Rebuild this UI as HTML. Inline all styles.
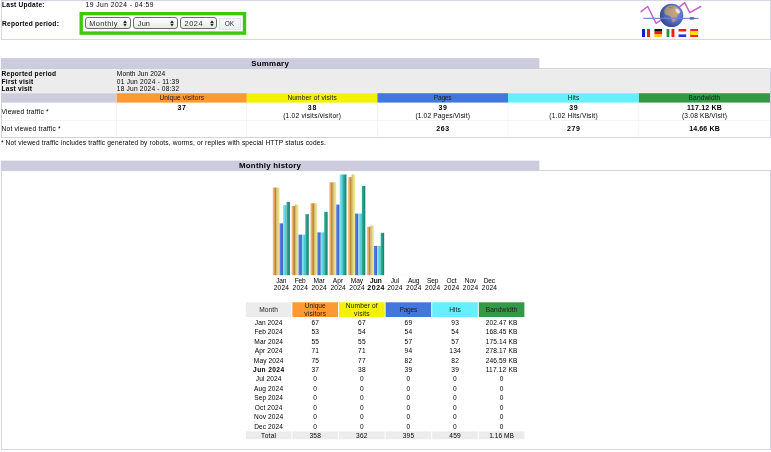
<!DOCTYPE html>
<html><head><meta charset="utf-8"><title>Statistics</title>
<style>
html,body{margin:0;padding:0;background:#fff;}
body{width:771px;height:452px;overflow:hidden;position:relative;font-family:"Liberation Sans",sans-serif;color:#000;}
.r{position:absolute;display:block;}
.t{position:absolute;display:block;white-space:pre;line-height:12px;font-family:"Liberation Sans",sans-serif;}
#w{position:absolute;left:0;top:0;width:771px;height:452px;will-change:transform;}
</style></head><body><div id="w">
<div class="r" style="left:0.50px;top:0.00px;width:770.00px;height:39.50px;background:#fff;box-sizing:border-box;border:1px solid #d6d6e6;"></div>
<div class="r" style="left:1.00px;top:68.30px;width:769.50px;height:70.00px;background:#fff;box-sizing:border-box;border:1px solid #d2d2e2;"></div>
<div class="r" style="left:1.00px;top:170.20px;width:769.50px;height:279.60px;background:#fff;box-sizing:border-box;border:1px solid #d2d2e2;"></div>
<svg class="r" style="left:0;top:0" width="771" height="452" viewBox="0 0 771 452"><defs><linearGradient id="g0" x1="0" y1="0" x2="1" y2="0"><stop offset="0%" stop-color="#f4b97a"/><stop offset="40%" stop-color="#eba95f"/><stop offset="72%" stop-color="#ba863c"/><stop offset="100%" stop-color="#a97a32"/></linearGradient><linearGradient id="g1" x1="0" y1="0" x2="1" y2="0"><stop offset="0%" stop-color="#c6b05a"/><stop offset="45%" stop-color="#e4d684"/><stop offset="100%" stop-color="#f1e9a4"/></linearGradient><linearGradient id="g2" x1="0" y1="0" x2="1" y2="0"><stop offset="0%" stop-color="#5a86e4"/><stop offset="50%" stop-color="#4674d8"/><stop offset="100%" stop-color="#3a5fc0"/></linearGradient><linearGradient id="g3" x1="0" y1="0" x2="1" y2="0"><stop offset="0%" stop-color="#8ae8f2"/><stop offset="50%" stop-color="#62d8e8"/><stop offset="100%" stop-color="#40b8cc"/></linearGradient><linearGradient id="g4" x1="0" y1="0" x2="1" y2="0"><stop offset="0%" stop-color="#38b09c"/><stop offset="50%" stop-color="#249a84"/><stop offset="100%" stop-color="#167a68"/></linearGradient></defs>
<rect x="81.2" y="13.7" width="163.3" height="19.4" fill="none" stroke="#3fc80b" stroke-width="3.4"/>
<rect x="0.80" y="58.10" width="538.60" height="11.10" fill="#ccccdd"/>
<rect x="1.50" y="69.20" width="768.50" height="24.00" fill="#ececec"/>
<rect x="1.50" y="93.20" width="115.20" height="9.40" fill="#ccccdd"/>
<rect x="116.70" y="93.20" width="130.10" height="9.40" fill="#ff9933"/>
<rect x="246.80" y="93.20" width="130.60" height="9.40" fill="#f3f300"/>
<rect x="377.40" y="93.20" width="130.60" height="9.40" fill="#4477dd"/>
<rect x="508.00" y="93.20" width="130.90" height="9.40" fill="#66f0ff"/>
<rect x="638.90" y="93.20" width="131.10" height="9.40" fill="#339944"/>
<rect x="116.40" y="102.60" width="0.60" height="34.90" fill="#ebebeb"/>
<rect x="246.50" y="102.60" width="0.60" height="34.90" fill="#ebebeb"/>
<rect x="377.10" y="102.60" width="0.60" height="34.90" fill="#ebebeb"/>
<rect x="507.70" y="102.60" width="0.60" height="34.90" fill="#ebebeb"/>
<rect x="638.60" y="102.60" width="0.60" height="34.90" fill="#ebebeb"/>
<rect x="1.50" y="120.20" width="768.50" height="0.60" fill="#ebebeb"/>
<rect x="0.80" y="160.60" width="538.60" height="10.50" fill="#ccccdd"/>
<rect x="272.80" y="187.58" width="3.42" height="87.62" fill="url(#g0)"/>
<rect x="276.22" y="187.58" width="3.42" height="87.62" fill="url(#g1)"/>
<rect x="279.64" y="223.35" width="3.42" height="51.85" fill="url(#g2)"/>
<rect x="283.06" y="205.31" width="3.42" height="69.89" fill="url(#g3)"/>
<rect x="286.48" y="201.90" width="3.42" height="73.30" fill="url(#g4)"/>
<rect x="291.65" y="205.89" width="3.42" height="69.31" fill="url(#g0)"/>
<rect x="295.07" y="204.58" width="3.42" height="70.62" fill="url(#g1)"/>
<rect x="298.49" y="234.62" width="3.42" height="40.58" fill="url(#g2)"/>
<rect x="301.91" y="234.62" width="3.42" height="40.58" fill="url(#g3)"/>
<rect x="305.33" y="214.22" width="3.42" height="60.98" fill="url(#g4)"/>
<rect x="310.50" y="203.27" width="3.42" height="71.93" fill="url(#g0)"/>
<rect x="313.92" y="203.27" width="3.42" height="71.93" fill="url(#g1)"/>
<rect x="317.34" y="232.36" width="3.42" height="42.84" fill="url(#g2)"/>
<rect x="320.76" y="232.36" width="3.42" height="42.84" fill="url(#g3)"/>
<rect x="324.18" y="211.80" width="3.42" height="63.40" fill="url(#g4)"/>
<rect x="329.35" y="182.35" width="3.42" height="92.85" fill="url(#g0)"/>
<rect x="332.77" y="182.35" width="3.42" height="92.85" fill="url(#g1)"/>
<rect x="336.19" y="204.56" width="3.42" height="70.64" fill="url(#g2)"/>
<rect x="339.61" y="174.50" width="3.42" height="100.70" fill="url(#g3)"/>
<rect x="343.03" y="174.50" width="3.42" height="100.70" fill="url(#g4)"/>
<rect x="348.20" y="177.12" width="3.42" height="98.08" fill="url(#g0)"/>
<rect x="351.62" y="174.50" width="3.42" height="100.70" fill="url(#g1)"/>
<rect x="355.04" y="213.58" width="3.42" height="61.62" fill="url(#g2)"/>
<rect x="358.46" y="213.58" width="3.42" height="61.62" fill="url(#g3)"/>
<rect x="361.88" y="185.93" width="3.42" height="89.27" fill="url(#g4)"/>
<rect x="367.05" y="226.81" width="3.42" height="48.39" fill="url(#g0)"/>
<rect x="370.47" y="225.50" width="3.42" height="49.70" fill="url(#g1)"/>
<rect x="373.89" y="245.89" width="3.42" height="29.31" fill="url(#g2)"/>
<rect x="377.31" y="245.89" width="3.42" height="29.31" fill="url(#g3)"/>
<rect x="380.73" y="232.80" width="3.42" height="42.40" fill="url(#g4)"/>
<rect x="385.90" y="274.70" width="3.42" height="0.50" fill="#f6f6f0"/>
<rect x="389.32" y="274.70" width="3.42" height="0.50" fill="#f6f6f0"/>
<rect x="392.74" y="274.70" width="3.42" height="0.50" fill="#f6f6f0"/>
<rect x="396.16" y="274.70" width="3.42" height="0.50" fill="#f6f6f0"/>
<rect x="399.58" y="274.70" width="3.42" height="0.50" fill="#f6f6f0"/>
<rect x="404.75" y="274.70" width="3.42" height="0.50" fill="#f6f6f0"/>
<rect x="408.17" y="274.70" width="3.42" height="0.50" fill="#f6f6f0"/>
<rect x="411.59" y="274.70" width="3.42" height="0.50" fill="#f6f6f0"/>
<rect x="415.01" y="274.70" width="3.42" height="0.50" fill="#f6f6f0"/>
<rect x="418.43" y="274.70" width="3.42" height="0.50" fill="#f6f6f0"/>
<rect x="423.60" y="274.70" width="3.42" height="0.50" fill="#f6f6f0"/>
<rect x="427.02" y="274.70" width="3.42" height="0.50" fill="#f6f6f0"/>
<rect x="430.44" y="274.70" width="3.42" height="0.50" fill="#f6f6f0"/>
<rect x="433.86" y="274.70" width="3.42" height="0.50" fill="#f6f6f0"/>
<rect x="437.28" y="274.70" width="3.42" height="0.50" fill="#f6f6f0"/>
<rect x="442.45" y="274.70" width="3.42" height="0.50" fill="#f6f6f0"/>
<rect x="445.87" y="274.70" width="3.42" height="0.50" fill="#f6f6f0"/>
<rect x="449.29" y="274.70" width="3.42" height="0.50" fill="#f6f6f0"/>
<rect x="452.71" y="274.70" width="3.42" height="0.50" fill="#f6f6f0"/>
<rect x="456.13" y="274.70" width="3.42" height="0.50" fill="#f6f6f0"/>
<rect x="461.30" y="274.70" width="3.42" height="0.50" fill="#f6f6f0"/>
<rect x="464.72" y="274.70" width="3.42" height="0.50" fill="#f6f6f0"/>
<rect x="468.14" y="274.70" width="3.42" height="0.50" fill="#f6f6f0"/>
<rect x="471.56" y="274.70" width="3.42" height="0.50" fill="#f6f6f0"/>
<rect x="474.98" y="274.70" width="3.42" height="0.50" fill="#f6f6f0"/>
<rect x="480.15" y="274.70" width="3.42" height="0.50" fill="#f6f6f0"/>
<rect x="483.57" y="274.70" width="3.42" height="0.50" fill="#f6f6f0"/>
<rect x="486.99" y="274.70" width="3.42" height="0.50" fill="#f6f6f0"/>
<rect x="490.41" y="274.70" width="3.42" height="0.50" fill="#f6f6f0"/>
<rect x="493.83" y="274.70" width="3.42" height="0.50" fill="#f6f6f0"/>
<rect x="245.80" y="302.30" width="45.60" height="14.70" fill="#ececec"/>
<rect x="292.40" y="302.30" width="45.60" height="14.70" fill="#ff9933"/>
<rect x="339.00" y="302.30" width="45.60" height="14.70" fill="#f3f300"/>
<rect x="385.60" y="302.30" width="45.60" height="14.70" fill="#4477dd"/>
<rect x="432.20" y="302.30" width="45.60" height="14.70" fill="#66f0ff"/>
<rect x="478.80" y="302.30" width="45.60" height="14.70" fill="#339944"/>
<rect x="245.80" y="431.40" width="45.60" height="7.80" fill="#ececec"/>
<rect x="292.40" y="431.40" width="45.60" height="7.80" fill="#ececec"/>
<rect x="339.00" y="431.40" width="45.60" height="7.80" fill="#ececec"/>
<rect x="385.60" y="431.40" width="45.60" height="7.80" fill="#ececec"/>
<rect x="432.20" y="431.40" width="45.60" height="7.80" fill="#ececec"/>
<rect x="478.80" y="431.40" width="45.60" height="7.80" fill="#ececec"/></svg>
<span class="t" style="left:2.00px;top:-1px;font-size:6.60px;letter-spacing:0.237px;font-weight:bold;">Last Update:</span>
<span class="t" style="left:85.50px;top:-1px;font-size:6.70px;letter-spacing:0.466px;">19 Jun 2024 - 04:59</span>
<span class="t" style="left:2.00px;top:18px;font-size:6.60px;letter-spacing:0.247px;font-weight:bold;">Reported period:</span>
<div class="r" style="left:84.80px;top:17.10px;width:45.80px;height:11.70px;background:linear-gradient(#ffffff,#f6f6f6 45%,#e9e9e9);box-sizing:border-box;border:1px solid #6a6a6a;border-radius:3px;"></div>
<span class="t" style="left:89.30px;top:18px;font-size:7.40px;letter-spacing:0.380px;color:#2a2a2a;">Monthly</span>
<svg class="r" style="left:123.30px;top:20px" width="4" height="7" viewBox="0 0 4 7"><path d="M0.2 2.9 L2 0.2 L3.8 2.9 Z M0.2 3.8 L2 6.4 L3.8 3.8 Z" fill="#222"/></svg>
<div class="r" style="left:133.30px;top:17.10px;width:44.30px;height:11.70px;background:linear-gradient(#ffffff,#f6f6f6 45%,#e9e9e9);box-sizing:border-box;border:1px solid #6a6a6a;border-radius:3px;"></div>
<span class="t" style="left:137.80px;top:18px;font-size:7.40px;letter-spacing:0.135px;color:#2a2a2a;">Jun</span>
<svg class="r" style="left:170.30px;top:20px" width="4" height="7" viewBox="0 0 4 7"><path d="M0.2 2.9 L2 0.2 L3.8 2.9 Z M0.2 3.8 L2 6.4 L3.8 3.8 Z" fill="#222"/></svg>
<div class="r" style="left:180.00px;top:17.10px;width:36.80px;height:11.70px;background:linear-gradient(#ffffff,#f6f6f6 45%,#e9e9e9);box-sizing:border-box;border:1px solid #6a6a6a;border-radius:3px;"></div>
<span class="t" style="left:184.50px;top:18px;font-size:7.40px;letter-spacing:0.525px;color:#2a2a2a;">2024</span>
<svg class="r" style="left:209.50px;top:20px" width="4" height="7" viewBox="0 0 4 7"><path d="M0.2 2.9 L2 0.2 L3.8 2.9 Z M0.2 3.8 L2 6.4 L3.8 3.8 Z" fill="#222"/></svg>
<div class="r" style="left:219.20px;top:18.40px;width:21.60px;height:11.30px;background:linear-gradient(#f8f8f8,#eeeeee);box-sizing:border-box;border:0.7px solid #dfe5ec;"></div>
<span class="t" style="left:224.85px;top:18px;font-size:6.50px;letter-spacing:-0.091px;color:#333;">OK</span>
<svg class="r" style="left:636px;top:0px" width="72" height="40" viewBox="636 0 72 40">
<defs>
<radialGradient id="gl" cx="0.62" cy="0.4" r="0.8"><stop offset="0" stop-color="#7d98e2"/><stop offset="0.5" stop-color="#5a76c8"/><stop offset="0.85" stop-color="#3f4f9c"/><stop offset="1" stop-color="#2e3a7a"/></radialGradient>
<radialGradient id="sh" cx="0.72" cy="0.36" r="0.9"><stop offset="0" stop-color="#304090" stop-opacity="0"/><stop offset="0.4" stop-color="#304090" stop-opacity="0.15"/><stop offset="0.75" stop-color="#283888" stop-opacity="0.42"/><stop offset="1" stop-color="#1c2870" stop-opacity="0.75"/></radialGradient>
<clipPath id="gc"><circle cx="671.6" cy="15.4" r="11.7"/></clipPath>
<filter id="bl" x="-20%" y="-20%" width="140%" height="140%"><feGaussianBlur stdDeviation="0.5"/></filter>
</defs>
<polyline points="641.1,11.7 647.7,6.5 656.1,23.4 662,19.4" fill="none" stroke="#c466c6" stroke-width="1.5" stroke-linejoin="round" stroke-linecap="round"/>
<polyline points="679,7.3 684.6,2.7 689.8,12.7 700.7,6.5" fill="none" stroke="#c466c6" stroke-width="1.5" stroke-linejoin="round" stroke-linecap="round"/>
<circle cx="671.6" cy="15.4" r="11.7" fill="url(#gl)"/>
<g clip-path="url(#gc)" filter="url(#bl)">
<path d="M664.5 9.5 C666 7 668.5 5.6 671 5.6 C673 5.4 675.5 6.2 677 7.2 C678.2 8.2 679.4 9.2 680.2 10.6 C680.6 12 680 13.6 678.8 14.2 C677.6 14.8 677.4 16 676.8 17.4 C676.2 19 675.4 20.8 674.2 22 C673.2 22.8 672.2 22.4 671.8 21 C671.4 19.4 671.6 17.6 670.6 16.4 C669.4 15.4 667.2 15.8 665.6 14.8 C664.2 13.6 663.8 11.2 664.5 9.5 Z" fill="#c9aa7c"/>
<path d="M675.5 8.6 C677 8.4 679 9.6 679.8 11.2 C680 12.6 679 13.6 677.8 13.2 C676.6 12.6 675.6 11 675.4 9.8 Z" fill="#efe9e0"/>
<path d="M668.5 7.4 C670 6.6 672.5 6.8 673.6 7.8 C672.4 8.6 670 8.6 668.5 7.4 Z" fill="#6a80c8" opacity="0.8"/>
<ellipse cx="665" cy="17.6" rx="1" ry="1.3" fill="#8d90b8" opacity="0.7"/>
<ellipse cx="676.2" cy="19.8" rx="0.7" ry="1.1" fill="#a99c98" opacity="0.7"/>
</g>
<circle cx="671.6" cy="15.4" r="11.7" fill="url(#sh)"/>
<line x1="643.3" y1="18.4" x2="698.6" y2="18.4" stroke="#7480c8" stroke-width="1.1" opacity="0.9"/>
<path d="M689.8 17 L693 17 L696 18.4 L693 19.8 L689.8 19.8 Z" fill="#5f6cc0"/>
<g>
<rect x="642" y="29" width="3.2" height="8" fill="#1418d6"/><rect x="645.2" y="29" width="1.8" height="8" fill="#fff"/><rect x="647" y="29" width="3" height="8" fill="#f51c1c"/>
<rect x="654.4" y="29" width="7.7" height="2.7" fill="#111"/><rect x="654.4" y="31.7" width="7.7" height="2.7" fill="#e8201c"/><rect x="654.4" y="34.4" width="7.7" height="2.6" fill="#f8d000"/>
<rect x="666.6" y="29" width="3" height="8" fill="#1e9a2c"/><rect x="669.6" y="29" width="1.9" height="8" fill="#fff"/><rect x="671.5" y="29" width="2.9" height="8" fill="#f51c1c"/>
<rect x="678.5" y="29" width="7.7" height="2.7" fill="#f51c1c"/><rect x="678.5" y="31.7" width="7.7" height="2.7" fill="#fff"/><rect x="678.5" y="34.4" width="7.7" height="2.6" fill="#2a32e0"/>
<rect x="690.2" y="29" width="7.9" height="8" fill="#f0282c"/><rect x="690.2" y="31" width="7.9" height="4" fill="#fde100"/>
</g>
</svg>
<span class="t" style="left:251.13px;top:58px;font-size:7.90px;letter-spacing:0.290px;font-weight:bold;">Summary</span>
<span class="t" style="left:1.60px;top:68px;font-size:6.60px;letter-spacing:0.250px;font-weight:bold;">Reported period</span>
<span class="t" style="left:1.60px;top:76px;font-size:6.60px;letter-spacing:0.224px;font-weight:bold;">First visit</span>
<span class="t" style="left:1.60px;top:83px;font-size:6.60px;letter-spacing:0.207px;font-weight:bold;">Last visit</span>
<span class="t" style="left:116.80px;top:68px;font-size:6.60px;letter-spacing:0.088px;">Month Jun 2024</span>
<span class="t" style="left:116.80px;top:76px;font-size:6.60px;letter-spacing:0.231px;">01 Jun 2024 - 11:39</span>
<span class="t" style="left:116.80px;top:83px;font-size:6.60px;letter-spacing:0.204px;">18 Jun 2024 - 08:32</span>
<span class="t" style="left:159.39px;top:92px;font-size:6.60px;letter-spacing:0.102px;color:#202020;">Unique visitors</span>
<span class="t" style="left:287.38px;top:92px;font-size:6.60px;letter-spacing:0.141px;color:#202020;">Number of visits</span>
<span class="t" style="left:433.87px;top:92px;font-size:6.60px;letter-spacing:-0.263px;color:#202020;">Pages</span>
<span class="t" style="left:567.63px;top:92px;font-size:6.60px;letter-spacing:0.091px;color:#202020;">Hits</span>
<span class="t" style="left:688.60px;top:92px;font-size:6.60px;letter-spacing:0.111px;color:#202020;">Bandwidth</span>
<span class="t" style="left:1.50px;top:106px;font-size:6.60px;letter-spacing:0.222px;">Viewed traffic *</span>
<span class="t" style="left:1.50px;top:123px;font-size:6.60px;letter-spacing:0.224px;">Not viewed traffic *</span>
<span class="t" style="left:177.48px;top:102px;font-size:7.00px;letter-spacing:0.746px;font-weight:bold;">37</span>
<span class="t" style="left:307.83px;top:102px;font-size:7.00px;letter-spacing:0.746px;font-weight:bold;">38</span>
<span class="t" style="left:283.15px;top:110px;font-size:6.60px;letter-spacing:0.255px;">(1.02 visits/visitor)</span>
<span class="t" style="left:438.43px;top:102px;font-size:7.00px;letter-spacing:0.746px;font-weight:bold;">39</span>
<span class="t" style="left:415.47px;top:110px;font-size:6.60px;letter-spacing:0.146px;">(1.02 Pages/Visit)</span>
<span class="t" style="left:436.30px;top:123px;font-size:7.00px;letter-spacing:0.559px;font-weight:bold;">263</span>
<span class="t" style="left:569.18px;top:102px;font-size:7.00px;letter-spacing:0.746px;font-weight:bold;">39</span>
<span class="t" style="left:549.23px;top:110px;font-size:6.60px;letter-spacing:0.238px;">(1.02 Hits/Visit)</span>
<span class="t" style="left:567.05px;top:123px;font-size:7.00px;letter-spacing:0.559px;font-weight:bold;">279</span>
<span class="t" style="left:687.08px;top:102px;font-size:7.00px;letter-spacing:0.208px;font-weight:bold;">117.12 KB</span>
<span class="t" style="left:681.91px;top:110px;font-size:6.60px;letter-spacing:0.215px;">(3.08 KB/Visit)</span>
<span class="t" style="left:689.21px;top:123px;font-size:7.00px;letter-spacing:0.130px;font-weight:bold;">14.66 KB</span>
<span class="t" style="left:0.90px;top:137px;font-size:6.60px;letter-spacing:0.153px;">* Not viewed traffic includes traffic generated by robots, worms, or replies with special HTTP status codes.</span>
<span class="t" style="left:239.02px;top:160px;font-size:7.90px;letter-spacing:0.225px;font-weight:bold;">Monthly history</span>
<span class="t" style="left:276.23px;top:275px;font-size:6.60px;letter-spacing:-0.254px;">Jan</span>
<span class="t" style="left:273.67px;top:282px;font-size:6.60px;letter-spacing:0.194px;">2024</span>
<span class="t" style="left:294.84px;top:275px;font-size:6.60px;letter-spacing:-0.305px;">Feb</span>
<span class="t" style="left:292.59px;top:282px;font-size:6.60px;letter-spacing:0.194px;">2024</span>
<span class="t" style="left:313.53px;top:275px;font-size:6.60px;letter-spacing:-0.070px;">Mar</span>
<span class="t" style="left:311.51px;top:282px;font-size:6.60px;letter-spacing:0.194px;">2024</span>
<span class="t" style="left:332.86px;top:275px;font-size:6.60px;letter-spacing:0.066px;">Apr</span>
<span class="t" style="left:330.43px;top:282px;font-size:6.60px;letter-spacing:0.194px;">2024</span>
<span class="t" style="left:350.87px;top:275px;font-size:6.60px;letter-spacing:-0.126px;">May</span>
<span class="t" style="left:349.35px;top:282px;font-size:6.60px;letter-spacing:0.194px;">2024</span>
<span class="t" style="left:369.96px;top:275px;font-size:6.60px;letter-spacing:0.070px;font-weight:bold;">Jun</span>
<span class="t" style="left:367.37px;top:282px;font-size:7.00px;letter-spacing:0.497px;font-weight:bold;">2024</span>
<span class="t" style="left:390.73px;top:275px;font-size:6.60px;letter-spacing:-0.133px;">Jul</span>
<span class="t" style="left:387.19px;top:282px;font-size:6.60px;letter-spacing:0.194px;">2024</span>
<span class="t" style="left:407.92px;top:275px;font-size:6.60px;letter-spacing:-0.052px;">Aug</span>
<span class="t" style="left:406.11px;top:282px;font-size:6.60px;letter-spacing:0.194px;">2024</span>
<span class="t" style="left:426.95px;top:275px;font-size:6.60px;letter-spacing:-0.163px;">Sep</span>
<span class="t" style="left:425.03px;top:282px;font-size:6.60px;letter-spacing:0.194px;">2024</span>
<span class="t" style="left:446.47px;top:275px;font-size:6.60px;letter-spacing:-0.028px;">Oct</span>
<span class="t" style="left:443.95px;top:282px;font-size:6.60px;letter-spacing:0.194px;">2024</span>
<span class="t" style="left:464.66px;top:275px;font-size:6.60px;letter-spacing:-0.028px;">Nov</span>
<span class="t" style="left:462.87px;top:282px;font-size:6.60px;letter-spacing:0.194px;">2024</span>
<span class="t" style="left:483.76px;top:275px;font-size:6.60px;letter-spacing:-0.205px;">Dec</span>
<span class="t" style="left:481.79px;top:282px;font-size:6.60px;letter-spacing:0.194px;">2024</span>
<span class="t" style="left:259.27px;top:304px;font-size:6.60px;letter-spacing:0.079px;color:#202020;">Month</span>
<span class="t" style="left:304.73px;top:300px;font-size:6.60px;letter-spacing:0.006px;color:#202020;">Unique</span>
<span class="t" style="left:304.37px;top:308px;font-size:6.60px;letter-spacing:0.161px;color:#202020;">visitors</span>
<span class="t" style="left:345.87px;top:300px;font-size:6.60px;letter-spacing:0.132px;color:#202020;">Number of</span>
<span class="t" style="left:354.07px;top:308px;font-size:6.60px;letter-spacing:0.158px;color:#202020;">visits</span>
<span class="t" style="left:399.57px;top:304px;font-size:6.60px;letter-spacing:-0.263px;color:#202020;">Pages</span>
<span class="t" style="left:449.18px;top:304px;font-size:6.60px;letter-spacing:0.091px;color:#202020;">Hits</span>
<span class="t" style="left:485.75px;top:304px;font-size:6.60px;letter-spacing:0.111px;color:#202020;">Bandwidth</span>
<span class="t" style="left:254.85px;top:317px;font-size:6.60px;letter-spacing:0.050px;">Jan 2024</span>
<span class="t" style="left:311.38px;top:317px;font-size:6.60px;letter-spacing:0.291px;">67</span>
<span class="t" style="left:357.98px;top:317px;font-size:6.60px;letter-spacing:0.291px;">67</span>
<span class="t" style="left:404.58px;top:317px;font-size:6.60px;letter-spacing:0.291px;">69</span>
<span class="t" style="left:451.18px;top:317px;font-size:6.60px;letter-spacing:0.291px;">93</span>
<span class="t" style="left:485.78px;top:317px;font-size:6.60px;letter-spacing:0.103px;">202.47 KB</span>
<span class="t" style="left:254.53px;top:326px;font-size:6.60px;letter-spacing:0.036px;">Feb 2024</span>
<span class="t" style="left:311.38px;top:326px;font-size:6.60px;letter-spacing:0.291px;">53</span>
<span class="t" style="left:357.98px;top:326px;font-size:6.60px;letter-spacing:0.291px;">54</span>
<span class="t" style="left:404.58px;top:326px;font-size:6.60px;letter-spacing:0.291px;">54</span>
<span class="t" style="left:451.18px;top:326px;font-size:6.60px;letter-spacing:0.291px;">54</span>
<span class="t" style="left:485.78px;top:326px;font-size:6.60px;letter-spacing:0.103px;">168.45 KB</span>
<span class="t" style="left:254.30px;top:336px;font-size:6.60px;letter-spacing:0.103px;">Mar 2024</span>
<span class="t" style="left:311.38px;top:336px;font-size:6.60px;letter-spacing:0.291px;">55</span>
<span class="t" style="left:357.98px;top:336px;font-size:6.60px;letter-spacing:0.291px;">55</span>
<span class="t" style="left:404.58px;top:336px;font-size:6.60px;letter-spacing:0.291px;">57</span>
<span class="t" style="left:451.18px;top:336px;font-size:6.60px;letter-spacing:0.291px;">57</span>
<span class="t" style="left:485.78px;top:336px;font-size:6.60px;letter-spacing:0.103px;">175.14 KB</span>
<span class="t" style="left:254.71px;top:345px;font-size:6.60px;letter-spacing:0.142px;">Apr 2024</span>
<span class="t" style="left:311.38px;top:345px;font-size:6.60px;letter-spacing:0.291px;">71</span>
<span class="t" style="left:357.98px;top:345px;font-size:6.60px;letter-spacing:0.291px;">71</span>
<span class="t" style="left:404.58px;top:345px;font-size:6.60px;letter-spacing:0.291px;">94</span>
<span class="t" style="left:449.28px;top:345px;font-size:6.60px;letter-spacing:0.218px;">134</span>
<span class="t" style="left:485.78px;top:345px;font-size:6.60px;letter-spacing:0.103px;">278.17 KB</span>
<span class="t" style="left:253.80px;top:355px;font-size:6.60px;letter-spacing:0.087px;">May 2024</span>
<span class="t" style="left:311.38px;top:355px;font-size:6.60px;letter-spacing:0.291px;">75</span>
<span class="t" style="left:357.98px;top:355px;font-size:6.60px;letter-spacing:0.291px;">77</span>
<span class="t" style="left:404.58px;top:355px;font-size:6.60px;letter-spacing:0.291px;">82</span>
<span class="t" style="left:451.18px;top:355px;font-size:6.60px;letter-spacing:0.291px;">82</span>
<span class="t" style="left:485.78px;top:355px;font-size:6.60px;letter-spacing:0.103px;">246.59 KB</span>
<span class="t" style="left:253.11px;top:364px;font-size:6.60px;letter-spacing:0.391px;font-weight:bold;">Jun 2024</span>
<span class="t" style="left:311.38px;top:364px;font-size:6.60px;letter-spacing:0.291px;">37</span>
<span class="t" style="left:357.98px;top:364px;font-size:6.60px;letter-spacing:0.291px;">38</span>
<span class="t" style="left:404.58px;top:364px;font-size:6.60px;letter-spacing:0.291px;">39</span>
<span class="t" style="left:451.18px;top:364px;font-size:6.60px;letter-spacing:0.291px;">39</span>
<span class="t" style="left:485.78px;top:364px;font-size:6.60px;letter-spacing:0.164px;">117.12 KB</span>
<span class="t" style="left:255.83px;top:373px;font-size:6.60px;letter-spacing:0.085px;">Jul 2024</span>
<span class="t" style="left:313.29px;top:373px;font-size:6.60px;letter-spacing:0.000px;">0</span>
<span class="t" style="left:359.89px;top:373px;font-size:6.60px;letter-spacing:0.000px;">0</span>
<span class="t" style="left:406.49px;top:373px;font-size:6.60px;letter-spacing:0.000px;">0</span>
<span class="t" style="left:453.09px;top:373px;font-size:6.60px;letter-spacing:0.000px;">0</span>
<span class="t" style="left:499.69px;top:373px;font-size:6.60px;letter-spacing:0.000px;">0</span>
<span class="t" style="left:254.09px;top:383px;font-size:6.60px;letter-spacing:0.108px;">Aug 2024</span>
<span class="t" style="left:313.29px;top:383px;font-size:6.60px;letter-spacing:0.000px;">0</span>
<span class="t" style="left:359.89px;top:383px;font-size:6.60px;letter-spacing:0.000px;">0</span>
<span class="t" style="left:406.49px;top:383px;font-size:6.60px;letter-spacing:0.000px;">0</span>
<span class="t" style="left:453.09px;top:383px;font-size:6.60px;letter-spacing:0.000px;">0</span>
<span class="t" style="left:499.69px;top:383px;font-size:6.60px;letter-spacing:0.000px;">0</span>
<span class="t" style="left:254.20px;top:392px;font-size:6.60px;letter-spacing:0.076px;">Sep 2024</span>
<span class="t" style="left:313.29px;top:392px;font-size:6.60px;letter-spacing:0.000px;">0</span>
<span class="t" style="left:359.89px;top:392px;font-size:6.60px;letter-spacing:0.000px;">0</span>
<span class="t" style="left:406.49px;top:392px;font-size:6.60px;letter-spacing:0.000px;">0</span>
<span class="t" style="left:453.09px;top:392px;font-size:6.60px;letter-spacing:0.000px;">0</span>
<span class="t" style="left:499.69px;top:392px;font-size:6.60px;letter-spacing:0.000px;">0</span>
<span class="t" style="left:254.81px;top:402px;font-size:6.60px;letter-spacing:0.115px;">Oct 2024</span>
<span class="t" style="left:313.29px;top:402px;font-size:6.60px;letter-spacing:0.000px;">0</span>
<span class="t" style="left:359.89px;top:402px;font-size:6.60px;letter-spacing:0.000px;">0</span>
<span class="t" style="left:406.49px;top:402px;font-size:6.60px;letter-spacing:0.000px;">0</span>
<span class="t" style="left:453.09px;top:402px;font-size:6.60px;letter-spacing:0.000px;">0</span>
<span class="t" style="left:499.69px;top:402px;font-size:6.60px;letter-spacing:0.000px;">0</span>
<span class="t" style="left:254.07px;top:411px;font-size:6.60px;letter-spacing:0.115px;">Nov 2024</span>
<span class="t" style="left:313.29px;top:411px;font-size:6.60px;letter-spacing:0.000px;">0</span>
<span class="t" style="left:359.89px;top:411px;font-size:6.60px;letter-spacing:0.000px;">0</span>
<span class="t" style="left:406.49px;top:411px;font-size:6.60px;letter-spacing:0.000px;">0</span>
<span class="t" style="left:453.09px;top:411px;font-size:6.60px;letter-spacing:0.000px;">0</span>
<span class="t" style="left:499.69px;top:411px;font-size:6.60px;letter-spacing:0.000px;">0</span>
<span class="t" style="left:254.25px;top:421px;font-size:6.60px;letter-spacing:0.064px;">Dec 2024</span>
<span class="t" style="left:313.29px;top:421px;font-size:6.60px;letter-spacing:0.000px;">0</span>
<span class="t" style="left:359.89px;top:421px;font-size:6.60px;letter-spacing:0.000px;">0</span>
<span class="t" style="left:406.49px;top:421px;font-size:6.60px;letter-spacing:0.000px;">0</span>
<span class="t" style="left:453.09px;top:421px;font-size:6.60px;letter-spacing:0.000px;">0</span>
<span class="t" style="left:499.69px;top:421px;font-size:6.60px;letter-spacing:0.000px;">0</span>
<span class="t" style="left:261.12px;top:430px;font-size:6.60px;letter-spacing:0.253px;">Total</span>
<span class="t" style="left:309.48px;top:430px;font-size:6.60px;letter-spacing:0.218px;">358</span>
<span class="t" style="left:356.08px;top:430px;font-size:6.60px;letter-spacing:0.218px;">362</span>
<span class="t" style="left:402.68px;top:430px;font-size:6.60px;letter-spacing:0.218px;">395</span>
<span class="t" style="left:449.28px;top:430px;font-size:6.60px;letter-spacing:0.218px;">459</span>
<span class="t" style="left:489.14px;top:430px;font-size:6.60px;letter-spacing:0.056px;">1.16 MB</span>
</div></body></html>
